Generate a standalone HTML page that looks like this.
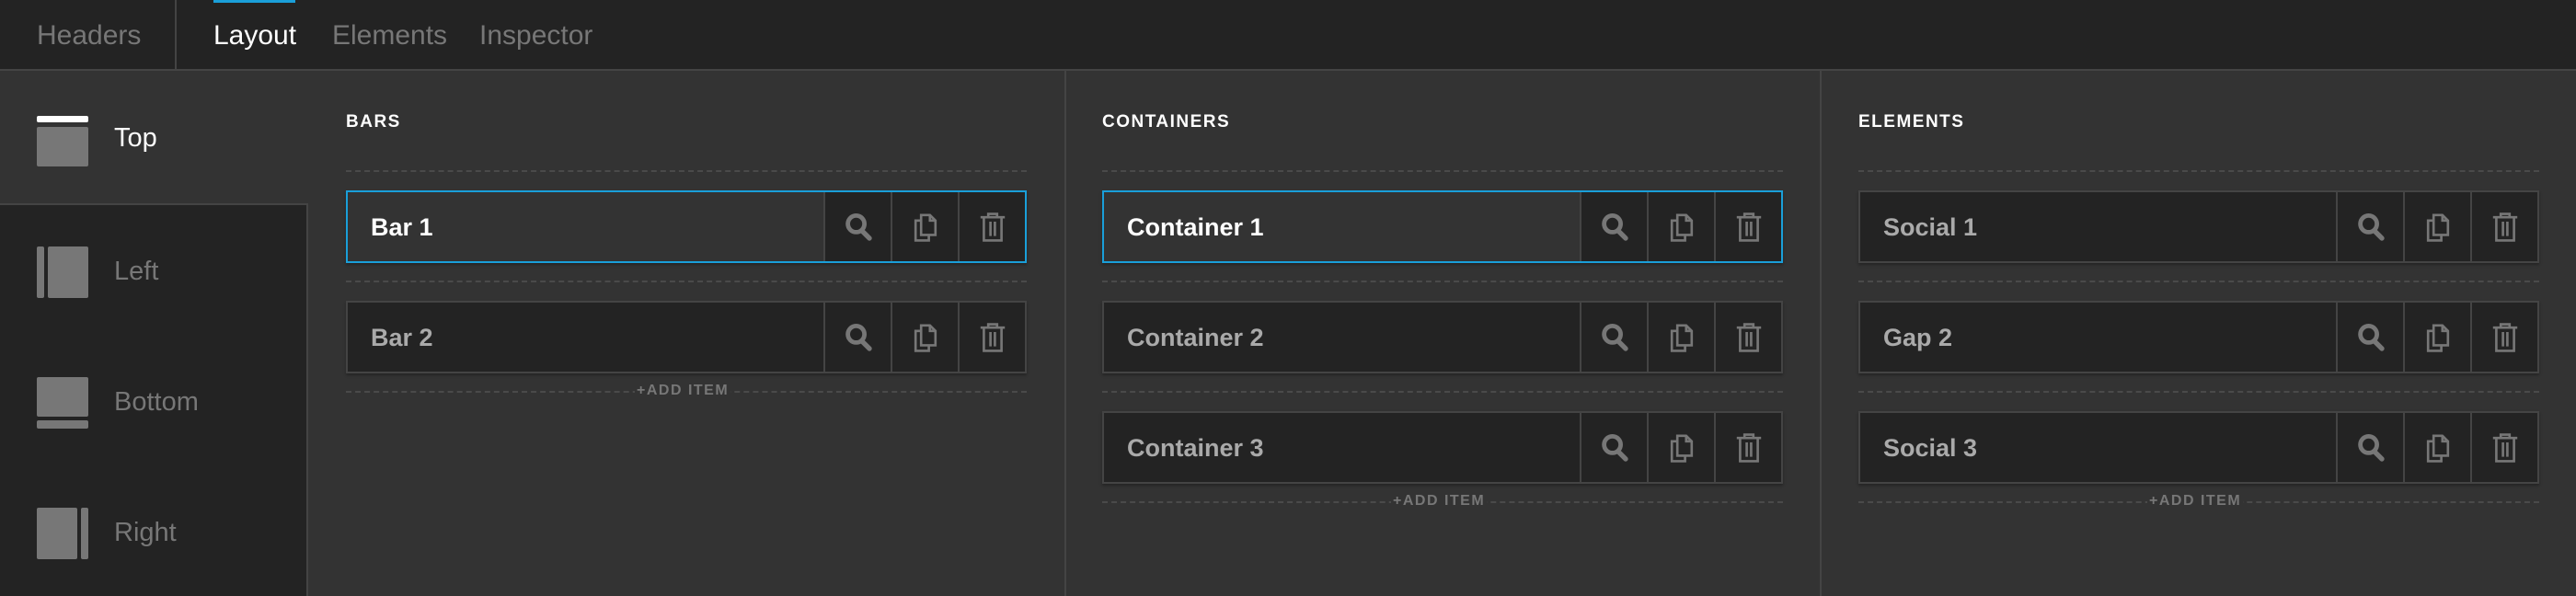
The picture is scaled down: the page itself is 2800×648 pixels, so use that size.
<!DOCTYPE html>
<html><head><meta charset="utf-8"><style>
*{box-sizing:border-box;margin:0;padding:0}
body{width:2800px;height:648px;background:#333;overflow:hidden;font-family:"Liberation Sans",sans-serif;position:relative}
.top{position:absolute;left:0;top:0;width:2800px;height:77px;background:#232323;border-bottom:2px solid #444}
.tab{position:absolute;top:22px;font-size:30px;color:#777}
.side{position:absolute;left:0;top:221px;width:335px;height:427px;background:#232323;border-top:2px solid #444;border-right:2px solid #444}
.si{position:absolute;left:124px;font-size:29px;color:#777}
.ic{position:absolute;background:#777;border-radius:2px}
.h{position:absolute;top:122px;font-size:19px;font-weight:bold;color:#fff;letter-spacing:1.5px}
.dash{position:absolute;height:0;border-top:2px dashed #4a4a4a}
.item{position:absolute;height:79px;background:#232323;border:2px solid #444;box-shadow:0 2px 3px rgba(0,0,0,.3)}
.item.sel{background:#333;border-color:#1a9fd9}
.item .t{position:absolute;left:25px;top:23px;font-size:27px;font-weight:bold;color:#aaa}
.item.sel .t{color:#fff}
.cell{position:absolute;top:0;width:73px;height:100%;background:#232323;border-left:2px solid #444}
.cell svg{position:absolute;left:20px;top:20px}
.add{position:absolute;font-size:16px;font-weight:bold;color:#777;letter-spacing:1.5px;background:#333;padding:0 2px}
.vd{position:absolute;top:77px;width:2px;height:571px;background:#444}
</style></head><body>
<div class="top">
<div class="tab" style="left:40px">Headers</div>
<div style="position:absolute;left:190px;top:0;width:2px;height:77px;background:#444"></div>
<div style="position:absolute;left:232px;top:0;width:89px;height:3px;background:#1a9fd9"></div>
<div class="tab" style="left:232px;color:#fff">Layout</div>
<div class="tab" style="left:361px">Elements</div>
<div class="tab" style="left:521px">Inspector</div>
</div>
<div class="ic" style="left:40px;top:126px;width:56px;height:7px;background:#fff"></div>
<div class="ic" style="left:40px;top:138px;width:56px;height:43px"></div>
<div class="si" style="top:134px;color:#fff">Top</div>
<div class="side"></div>
<div class="ic" style="left:40px;top:268px;width:8px;height:56px"></div>
<div class="ic" style="left:52px;top:268px;width:44px;height:56px"></div>
<div class="si" style="top:279px">Left</div>
<div class="ic" style="left:40px;top:410px;width:56px;height:43px"></div>
<div class="ic" style="left:40px;top:457px;width:56px;height:9px"></div>
<div class="si" style="top:421px">Bottom</div>
<div class="ic" style="left:40px;top:552px;width:44px;height:56px"></div>
<div class="ic" style="left:88px;top:552px;width:8px;height:56px"></div>
<div class="si" style="top:563px">Right</div>
<div class="vd" style="left:1157px"></div>
<div class="vd" style="left:1978px"></div>
<div id="cols"></div>
<script>
const cols=[[376,"BARS",[["Bar 1",1],["Bar 2",0]]],[1198,"CONTAINERS",[["Container 1",1],["Container 2",0],["Container 3",0]]],[2020,"ELEMENTS",[["Social 1",0],["Gap 2",0],["Social 3",0]]]];
const W=740;
const mag='<svg width="32" height="36" viewBox="0 0 26 30"><circle cx="11" cy="12" r="7.5" fill="none" stroke="#777" stroke-width="4"/><path d="M16 18l7 7" stroke="#777" stroke-width="4.5" stroke-linecap="round"/></svg>';
const cp='<svg width="32" height="36" viewBox="0 0 26 30"><path d="M9 4h8l5 5v13H9z M17 4v5h5" fill="none" stroke="#777" stroke-width="2.2"/><path d="M9 9H4v18h12v-5" fill="none" stroke="#777" stroke-width="2.2"/></svg>';
const tr='<svg width="32" height="36" viewBox="0 0 26 30"><path d="M2 6h22M9 6V3h8v3M5 6v21h16V6M11 10v13M15 10v13" fill="none" stroke="#777" stroke-width="2.2"/></svg>';
let h='';
for(const [x,t,items] of cols){
h+=`<div class="h" style="left:${x}px">${t}</div>`;
items.forEach((it,i)=>{const y=207+i*120;
h+=`<div class="dash" style="left:${x}px;top:${y-22}px;width:${W}px"></div>`;
h+=`<div class="item${it[1]?' sel':''}" style="left:${x}px;top:${y}px;width:${W}px"><div class="t">${it[0]}</div>
<div class="cell" style="left:${W-4-73*3}px">${mag}</div><div class="cell" style="left:${W-4-73*2}px">${cp}</div><div class="cell" style="left:${W-4-73}px">${tr}</div></div>`;});
const ay=207+items.length*120-22;
h+=`<div class="dash" style="left:${x}px;top:${ay}px;width:${W}px"></div>`;
h+=`<div class="add" style="left:${x+W/2-56}px;top:${ay-9}px">+ADD ITEM</div>`;
}
document.getElementById('cols').innerHTML=h;
</script>
</body></html>
